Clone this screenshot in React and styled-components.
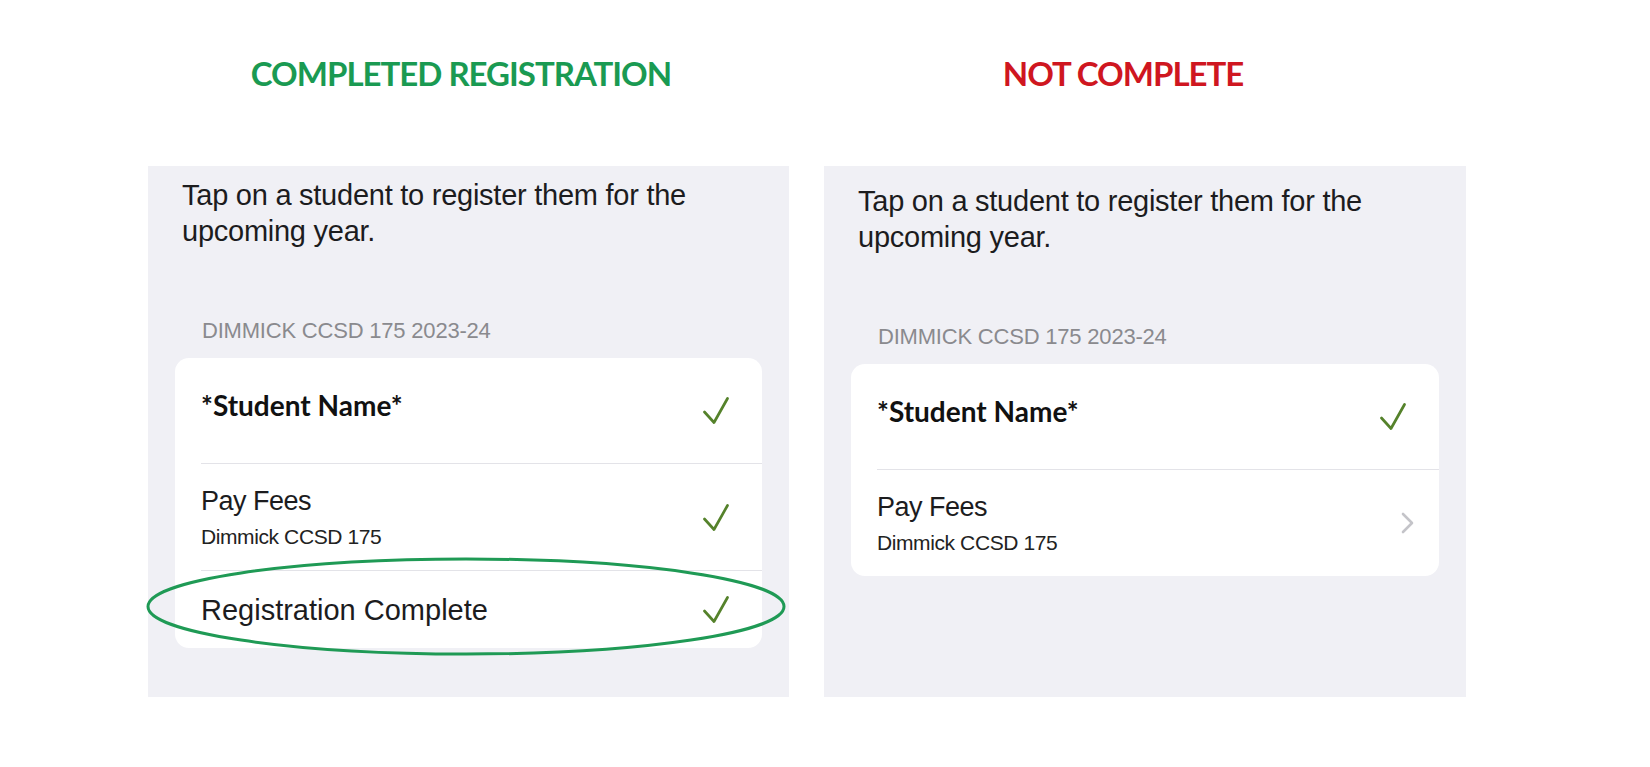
import styled, { createGlobalStyle } from 'styled-components'

const GlobalStyle = createGlobalStyle`
	body {
		margin: 0;
		background: #ffffff;
		font-family: "Liberation Sans", Arial, sans-serif;
	}
`
const Page = styled.div`
	width: 1650px;
	height: 767px;
	box-sizing: border-box;
	padding: 53px 0 0 148px;
	display: flex;
	gap: 35px;
`
const Column = styled.div`
	width: ${(p) => p.$w}px;
	display: flex;
	flex-direction: column;
`
const Title = styled.h2`
	margin: 0 0 73px;
	padding-right: ${(p) => p.$shift}px;
	font-family: Lato, "Open Sans", sans-serif;
	font-weight: 700;
	font-size: 33px;
	line-height: 40px;
	letter-spacing: -1px;
	text-align: center;
	white-space: nowrap;
	color: ${(p) => p.$color};
`
const Panel = styled.div`
	height: 531px;
	box-sizing: border-box;
	padding: ${(p) => p.$top}px 27px 0;
	background: #f0f0f5;
`
const Intro = styled.p`
	margin: 0 0 0 7px;
	font-size: 29px;
	line-height: 36px;
	letter-spacing: -0.25px;
	color: #1c1c1e;
`
const SectionHeader = styled.div`
	margin: 69px 0 14px 27px;
	font-size: 22px;
	line-height: 26px;
	letter-spacing: -0.2px;
	color: #8a8a8e;
`
const Card = styled.div`
	background: #ffffff;
	border-radius: 14px;
`
const Row = styled.div`
	position: relative;
	display: flex;
	align-items: center;
	justify-content: space-between;
	box-sizing: border-box;
	min-height: ${(p) => p.$h}px;
	margin-left: 26px;
	padding-right: 29px;
	& + & {
		border-top: 1px solid #e3e3e8;
	}
`
const StudentName = styled.div`
	align-self: flex-start;
	margin-top: 31px;
	font-family: Lato, "Open Sans", sans-serif;
	font-weight: 700;
	font-size: 28px;
	line-height: 32px;
	color: #111111;
`
const RowTitle = styled.div`
	font-size: ${(p) => p.$size || 27}px;
	line-height: 32px;
	letter-spacing: ${(p) => (p.$size ? 0 : -0.5)}px;
	color: #1c1c1e;
`
const RowSub = styled.div`
	margin-top: 7px;
	font-size: 21px;
	line-height: 26px;
	letter-spacing: -0.4px;
	color: #222222;
`
const Trailing = styled.svg`
	flex: none;
	margin-right: ${(p) => p.$mr || 0}px;
`
const Ring = styled.svg`
	position: absolute;
	left: -55px;
	top: -14px;
	pointer-events: none;
`

const Check = () => (
	<Trailing width='26' height='27' viewBox='0 0 26 27' $mr={4}>
		<path d='M1.5 15 L11 25.5 L24.5 1.5' fill='none' stroke='#55822b' strokeWidth='2.7' strokeLinecap='round' strokeLinejoin='round' />
	</Trailing>
)

const Chevron = () => (
	<Trailing width='13' height='22' viewBox='0 0 13 22' $mr={-4}>
		<path d='M2 2 L11 11 L2 20' fill='none' stroke='#c4c4c9' strokeWidth='2.6' strokeLinecap='round' strokeLinejoin='round' />
	</Trailing>
)

const StudentPanel = ({ top, done }) => (
	<Panel $top={top}>
		<Intro>
			Tap on a student to register them for the
			<br />
			upcoming year.
		</Intro>
		<SectionHeader>DIMMICK CCSD 175 2023-24</SectionHeader>
		<Card>
			<Row $h={105}>
				<StudentName>*Student Name*</StudentName>
				<Check />
			</Row>
			<Row $h={107}>
				<div>
					<RowTitle>Pay Fees</RowTitle>
					<RowSub>Dimmick CCSD 175</RowSub>
				</div>
				{done ? <Check /> : <Chevron />}
			</Row>
			{done && (
				<Row $h={78}>
					<RowTitle $size={29}>Registration Complete</RowTitle>
					<Check />
					<Ring width='640' height='99' viewBox='0 0 640 99'>
						<ellipse cx='320' cy='49.5' rx='318' ry='47.5' fill='none' stroke='#1f9a55' strokeWidth='3' />
					</Ring>
				</Row>
			)}
		</Card>
	</Panel>
)

const App = () => {
	return (
		<>
			<GlobalStyle />
			<Page>
				<Column $w={641}>
					<Title $color='#1a9a52' $shift={15}>COMPLETED REGISTRATION</Title>
					<StudentPanel top={11} done />
				</Column>
				<Column $w={642}>
					<Title $color='#cf1620' $shift={44}>NOT COMPLETE</Title>
					<StudentPanel top={17} />
				</Column>
			</Page>
		</>
	)
}
export default App
